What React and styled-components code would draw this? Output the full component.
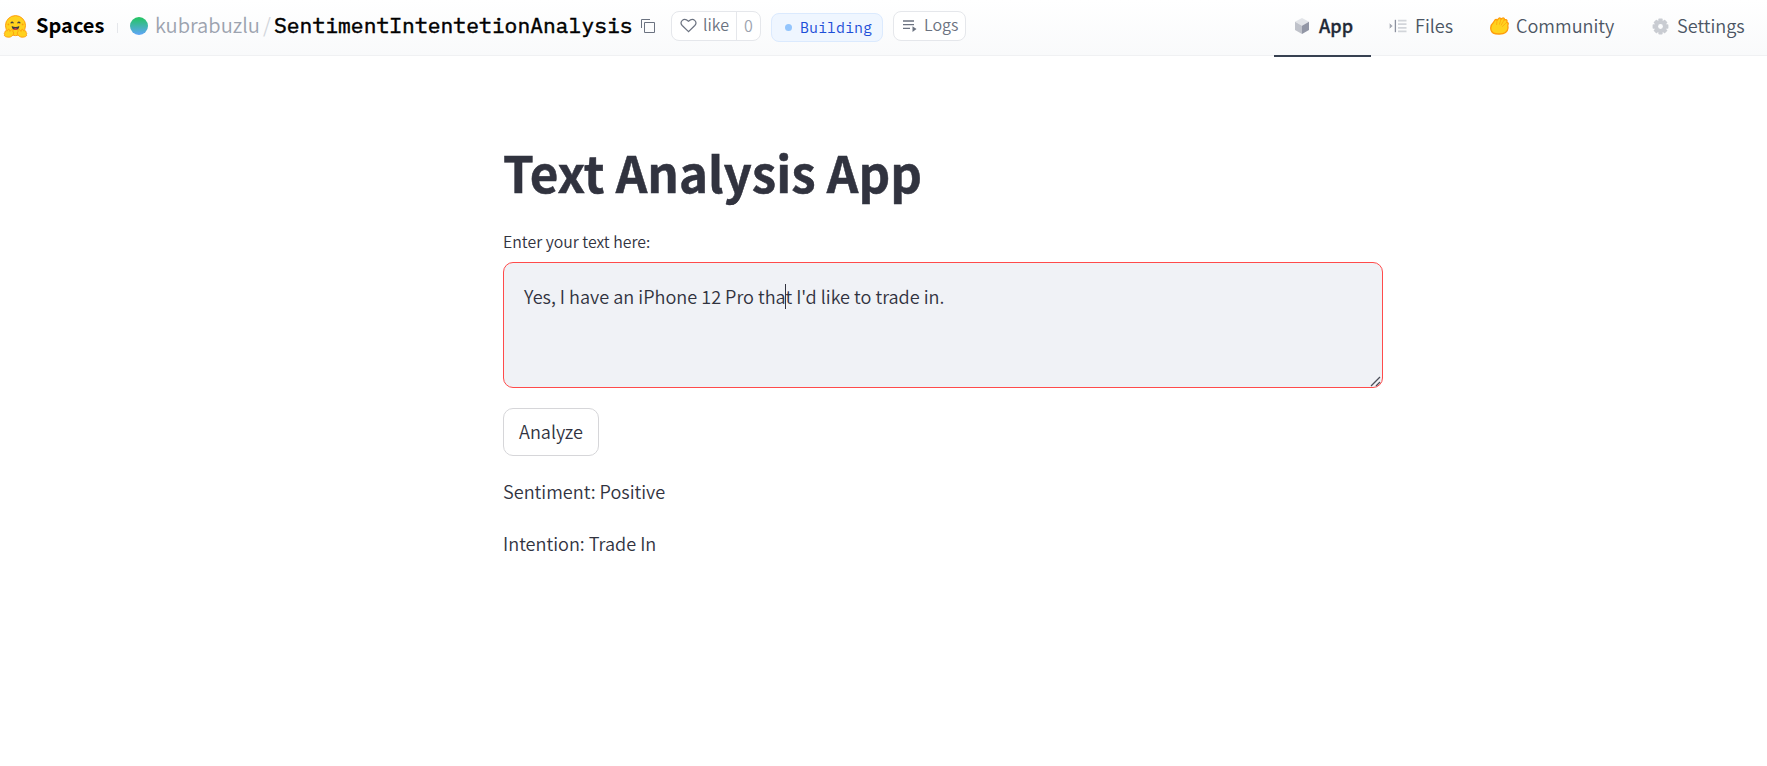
import React from "react";
import styled, { createGlobalStyle } from "styled-components";

const GlobalStyle = createGlobalStyle`
  * { box-sizing: border-box; }
  body {
    margin: 0;
    background: #fff;
    color: #31333f;
    font-family: "Source Sans Pro", "Noto Sans CJK SC", "Noto Sans", sans-serif;
    font-weight: 350;
  }
`;

const mono = `"IBM Plex Mono", "Liberation Mono", monospace`;

const Header = styled.header`
  height: 56px;
  display: flex;
  justify-content: space-between;
  border-bottom: 1px solid #f0f1f3;
  background: linear-gradient(to bottom, #fff, #f9fafb);
  white-space: nowrap;
`;

const Brand = styled.div`
  display: flex;
  align-items: center;
  height: 52px;
  padding-left: 3px;
  line-height: 30px;
`;

const BrandName = styled.span`
  width: 68px;
  margin: -2px 0 0 8px;
  font-size: 20px;
  font-weight: 700;
  color: #000;
`;

const Divider = styled.span`
  width: 1px;
  height: 10px;
  margin: 3px 12px 0 13px;
  background: #e5e7eb;
`;

const Avatar = styled.span`
  width: 18px;
  height: 18px;
  border-radius: 50%;
  background: linear-gradient(to bottom, #22c55e, #60a5fa);
`;

const Owner = styled.span`
  width: 106px;
  margin: -2px 0 0 7px;
  font-size: 20.1px;
  color: #9ca3af;
`;

const Slash = styled.span`
  width: 11px;
  margin: -2px 0 0 2px;
  font-size: 20px;
  color: #d1d5db;
`;

const RepoName = styled.span`
  width: 358px;
  margin-top: -2px;
  font: 400 21.25px/30px ${mono};
  letter-spacing: 0.06px;
  -webkit-text-stroke: 0.5px #000;
  color: #000;
`;

const CopyIcon = styled.svg`
  margin: 0 16px 0 9px;
  color: #6b7280;
`;

const Pill = styled.div`
  display: flex;
  align-items: center;
  height: 30px;
  width: ${(p) => p.$width}px;
  margin: -1px ${(p) => p.$gap || 0}px 0 0;
  border: 1px solid #e5e7eb;
  border-radius: 8px;
  background: #fff;
  color: #6b7280;
  font-size: 16px;
  line-height: 26px;
`;

const PillIcon = styled.svg`
  flex: none;
  margin-left: 8px;
`;

const PillText = styled.span`
  margin: -3px 0 0 ${(p) => p.$left}px;
`;

const Count = styled.span`
  flex: 1;
  height: 28px;
  margin-left: 7px;
  border-left: 1px solid #e5e7eb;
  text-align: center;
  color: #9ca3af;
`;

const Status = styled.div`
  display: flex;
  align-items: center;
  width: 112px;
  height: 29px;
  margin: 3px 10px 0 0;
  padding-left: 13px;
  gap: 8px;
  border: 1px solid #dbeafe;
  border-radius: 8px;
  background: #eff6ff;
  color: #1d4ed8;
  font: 400 15px/28px ${mono};
`;

const StatusDot = styled.span`
  width: 7px;
  height: 7px;
  border-radius: 50%;
  background: #93c5fd;
`;

const Nav = styled.nav`
  display: flex;
  height: 57px;
  padding-right: 3px;
`;

const Tab = styled.a`
  display: flex;
  align-items: center;
  width: ${(p) => p.$width}px;
  height: 57px;
  padding: 0 0 3px 18px;
  border-bottom: 2px solid ${(p) => (p.$active ? "#374151" : "transparent")};
  color: ${(p) => (p.$active ? "#1f2937" : "#4b5563")};
  font-size: 18.1px;
  font-weight: ${(p) => (p.$active ? 500 : 350)};
  -webkit-text-stroke: ${(p) => (p.$active ? "0.3px #1f2937" : "0")};
`;

const TabLabel = styled.span`
  margin-top: -2px;
`;

const TabIcon = styled.svg`
  flex: none;
  margin-right: ${(p) => p.$gap || 8}px;
`;

const Page = styled.main`
  width: 880px;
  margin-left: 503px;
  padding-top: 80px;
`;

const Title = styled.h1`
  margin: 0;
  height: 72px;
  font-size: 49.3px;
  font-weight: 700;
  line-height: 72px;
  white-space: nowrap;
  -webkit-text-stroke: 0.5px #31333f;
`;

const Label = styled.label`
  display: block;
  margin-top: 22px;
  height: 32px;
  font-size: 15.85px;
  line-height: 24px;
`;

const Field = styled.div`
  position: relative;
  height: 126px;
`;

const TextArea = styled.textarea`
  display: block;
  width: 100%;
  height: 126px;
  padding: 17px 20px;
  border: 1px solid #ff4b4b;
  border-radius: 10px;
  outline: none;
  resize: none;
  background: #f0f2f6;
  color: #31333f;
  font: 350 18.1px/32px "Source Sans Pro", "Noto Sans CJK SC", sans-serif;
`;

const Caret = styled.span`
  position: absolute;
  left: 282px;
  top: 22px;
  width: 1px;
  height: 25px;
  background: #31333f;
`;

const Grip = styled.svg`
  position: absolute;
  right: 2px;
  bottom: 1px;
`;

const Button = styled.button`
  display: block;
  width: 96px;
  height: 48px;
  margin: 20px 0 19px;
  padding: 0 0 2px;
  border: 1px solid #d6d6d9;
  border-radius: 10px;
  background: #fff;
  color: #31333f;
  font: 350 18.1px/32px "Source Sans Pro", "Noto Sans CJK SC", sans-serif;
`;

const Result = styled.p`
  margin: 0 0 20px;
  font-size: 18.1px;
  line-height: 32px;
`;

const HuggingFace = () => (
  <svg width="25" height="23" viewBox="0 0 24 23">
    <circle cx="12" cy="10.6" r="10" fill="#ffd21e" stroke="#ff9d0b" strokeWidth="1" />
    <path d="M7.6 7.8q1-1.3 2 0M14.4 7.8q1-1.3 2 0" fill="none" stroke="#3a3b45" strokeWidth="1.3" strokeLinecap="round" />
    <path d="M8.2 11q3.8 1.8 7.6 0c.3 5.4-7.9 5.4-7.6 0Z" fill="#3a3b45" />
    <path d="M10 14q2-1.5 4 0-2 1.7-4 0Z" fill="#f94040" />
    <circle cx="4.9" cy="9.4" r=".9" fill="#ff9d0b" />
    <circle cx="19.1" cy="9.4" r=".9" fill="#ff9d0b" />
    <g fill="#ffd21e" stroke="#ff9d0b" strokeWidth=".9" strokeLinejoin="round">
      <path d="M5 14c1.1 0 .9 1.5 1.3 2.4l1.8-1.7c1.4-.8 1.8.6 1.1 1.5 2.6 1.8-.4 6-3.8 6-3.2 0-4.6-1.1-4.6-2.1 0-.7.5-.8.5-.8-.8-.7-.5-1.5.1-1.6-.6-.9.3-1.7 1-1.2-.5-1.4.7-1.7 1.5-.7Z" />
      <path d="M19 14c-1.1 0-.9 1.5-1.3 2.4l-1.8-1.7c-1.4-.8-1.8.6-1.1 1.5-2.6 1.8.4 6 3.8 6 3.2 0 4.6-1.1 4.6-2.1 0-.7-.5-.8-.5-.8.8-.7.5-1.5-.1-1.6.6-.9-.3-1.7-1-1.2.5-1.4-.7-1.7-1.5-.7Z" />
    </g>
  </svg>
);

const Cube = () => (
  <TabIcon width="20" height="18" viewBox="0 0 20 18" $gap={7}>
    <path d="M10 1 17 4.8 10 8.8 3 4.8Z" fill="#e2e4e8" />
    <path d="M3 4.8 10 8.8V17L3 13Z" fill="#bfc2ca" />
    <path d="M17 4.8 10 8.8V17L17 13Z" fill="#9296a5" />
  </TabIcon>
);

const FilesIcon = () => (
  <TabIcon width="18" height="14" viewBox="0 0 18 14">
    <path d="m.7 4.8 2.5 2.2L.7 9.2" fill="#a4a8b2" stroke="#a4a8b2" strokeWidth=".8" />
    <path d="M6.4.8v12.4" stroke="#8c919f" strokeWidth="1.3" />
    <path d="M9 1.7h8.5M9 5.2h8.5M9 8.8h8.5M9 12.3h8.5" stroke="#d2d5da" strokeWidth="1.7" />
  </TabIcon>
);

const ClapIcon = () => (
  <TabIcon width="19" height="18" viewBox="0 0 19 18" $gap={7}>
    <path
      d="M1 13C.2 10 1 7.5 3.6 5.2L5 3C5.8 2 6.8 2.3 7 3.2L8.6 1.6C9.6.6 10.9 1 11 2.1L12.3 1.2C13.6.5 14.7 1.5 14.2 2.8L15.5 2.6C17.1 2.5 17.4 4 16.7 5.3 18.2 5.3 18.7 6.7 17.8 8L18 11C17.6 15 14 17 9.5 17 4.5 17.2 1.7 15.7 1 13Z"
      fill="#ffd21e"
      stroke="#ff9d0b"
      strokeWidth="1.3"
      strokeLinejoin="round"
    />
    <path d="m11 2.1-1.6 5.4M14.2 2.8l-3.2 5.6M16.7 5.3l-4.5 4.4M7 3.2 6.6 8" fill="none" stroke="#ff9d0b" strokeWidth=".7" />
  </TabIcon>
);

const Gear = () => (
  <TabIcon width="17" height="17" viewBox="0 0 17 17">
    <g fill="#c9ccd2">
      {[0, 45, 90, 135].map((a) => (
        <rect key={a} x="6.3" y=".6" width="4.4" height="15.8" rx=".8" transform={`rotate(${a} 8.5 8.5)`} />
      ))}
      <circle cx="8.5" cy="8.5" r="6" />
    </g>
    <circle cx="8.5" cy="8.5" r="2.4" fill="#fbfcfd" />
  </TabIcon>
);

export default function App() {
  return (
    <>
      <GlobalStyle />
      <Header>
        <Brand>
          <HuggingFace />
          <BrandName>Spaces</BrandName>
          <Divider />
          <Avatar />
          <Owner>kubrabuzlu</Owner>
          <Slash>/</Slash>
          <RepoName>SentimentIntentetionAnalysis</RepoName>
          <CopyIcon width="14" height="14" viewBox="0 0 14 14" fill="none" stroke="currentColor">
            <path d="M.5 9V.5H9" />
            <path d="M3.5 3.5h10v10h-10z" />
          </CopyIcon>
          <Pill $width={90} $gap={10}>
            <PillIcon width="17" height="15" viewBox="0 0 17 15">
              <path d="M8.5 13.6 2.2 7.5C-.8 4.2 3.4-1.4 8.5 3.2 13.6-1.4 17.8 4.2 14.8 7.5Z" fill="none" stroke="#6b7280" strokeWidth="1.2" />
            </PillIcon>
            <PillText $left={6}>like</PillText>
            <Count>0</Count>
          </Pill>
          <Status>
            <StatusDot />
            Building
          </Status>
          <Pill $width={73}>
            <PillIcon width="15" height="14" viewBox="0 0 15 14">
              <path d="M1 2h11M1 5.7h11M1 9.4h7" stroke="#6b7280" strokeWidth="1.3" />
              <path d="m10.5 7.3 4 2.8-4 2.8Z" fill="#6b7280" />
            </PillIcon>
            <PillText $left={7}>Logs</PillText>
          </Pill>
        </Brand>
        <Nav>
          <Tab $width={97} $active>
            <Cube />
            <TabLabel>App</TabLabel>
          </Tab>
          <Tab $width={101}>
            <FilesIcon />
            <TabLabel>Files</TabLabel>
          </Tab>
          <Tab $width={162}>
            <ClapIcon />
            <TabLabel>Community</TabLabel>
          </Tab>
          <Tab $width={130}>
            <Gear />
            <TabLabel>Settings</TabLabel>
          </Tab>
        </Nav>
      </Header>
      <Page>
        <Title>Text Analysis App</Title>
        <Label htmlFor="entry">Enter your text here:</Label>
        <Field>
          <TextArea id="entry" defaultValue="Yes, I have an iPhone 12 Pro that I'd like to trade in." />
          <Caret />
          <Grip width="11" height="11" viewBox="0 0 11 11" stroke="#4b4d57" strokeWidth="1.3">
            <path d="M1 10 10 1M6 10l4-4" />
          </Grip>
        </Field>
        <Button>Analyze</Button>
        <Result>Sentiment: Positive</Result>
        <Result>Intention: Trade In</Result>
      </Page>
    </>
  );
}
